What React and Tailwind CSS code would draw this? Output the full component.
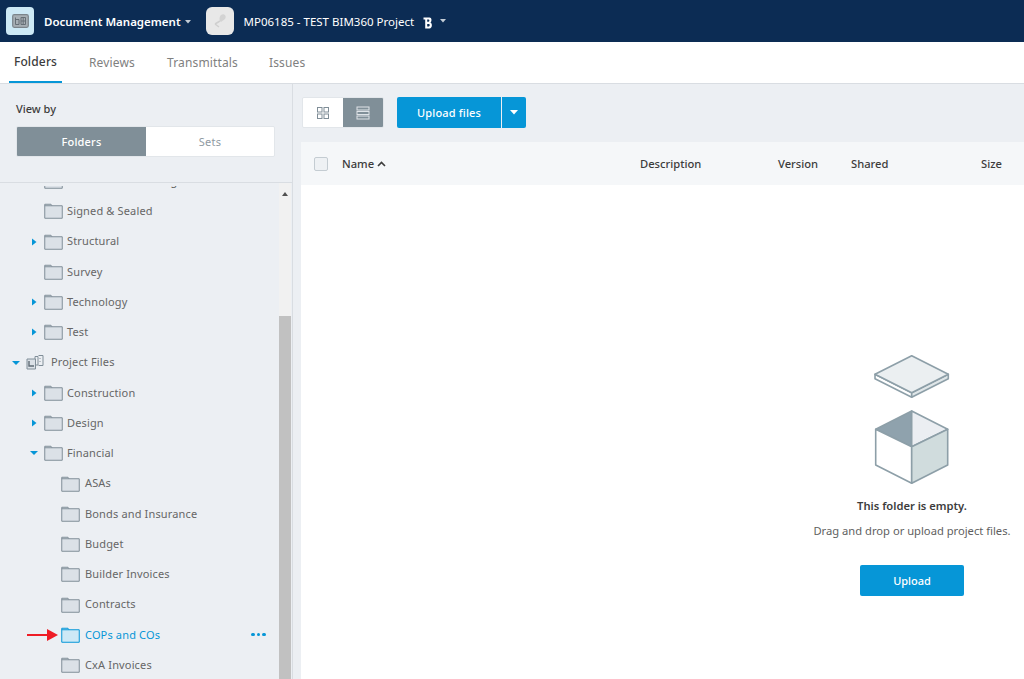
const font = { fontFamily: '"Noto Sans", "Open Sans", sans-serif' };

function Caret({ dir = "right", className = "" }) {
  return (
    <svg width="8" height="8" viewBox="0 0 8 8" className={className}>
      {dir === "right" ? <path d="M2 0.5 L6.5 4 L2 7.5 Z" fill="#0696d7" /> : <path d="M0 2 L8 2 L4 6 Z" fill="#0696d7" />}
    </svg>
  );
}

function Folder({ active }) {
  const stroke = active ? "#0696d7" : "#808e98";
  const fill = active ? "#cde9f6" : "#dbe1e7";
  return (
    <svg width="19" height="16" viewBox="0 0 19 16" className="shrink-0">
      <path d="M0.75 15.25 V1.25 H7 L8 2.75 H18.25 V15.25 Z" fill={fill} stroke={stroke} strokeWidth="1" />
      <path d="M0.75 2.75 H8" stroke={stroke} strokeWidth="1" fill="none" />
    </svg>
  );
}

function ProjectFilesIcon() {
  return (
    <svg width="18" height="15" viewBox="0 0 18 15" className="shrink-0">
      <path d="M9 1.5 H12 V10 H9 Z M12.5 0.5 H17 V10.5 H12.5" fill="#eceff3" stroke="#808e98" strokeWidth="1" />
      <path d="M1 4 H9.5 V14 H1 Z" fill="#dbe1e7" stroke="#808e98" strokeWidth="1" />
      <path d="M3 6 V11 H8" fill="none" stroke="#5f6b75" strokeWidth="1.4" />
      <path d="M14 3 V4 M14 6 V7" stroke="#808e98" strokeWidth="1" />
    </svg>
  );
}

function Row({ label, indent, caret, active, icon }) {
  const gap = icon === "project" ? "ml-[7px]" : indent === 47 ? "ml-[5px]" : "ml-[4px]";
  return (
    <div className="h-[30.25px] flex items-center relative">
      <div className="flex items-center" style={{ paddingLeft: indent }}>
        <span className="w-[14px] flex items-center shrink-0">{caret && <Caret dir={caret} />}</span>
        {icon === "project" ? <ProjectFilesIcon /> : <Folder active={active} />}
        <span className={`${gap} text-[11px] tracking-[0.15px] whitespace-nowrap ${active ? "text-[#0696d7]" : "text-[#666666]"}`}>{label}</span>
      </div>
      {active && (
        <span className="absolute left-[251px] top-[13px] flex gap-[2px]">
          <i className="block w-[3.5px] h-[3.5px] rounded-full bg-[#0696d7]" />
          <i className="block w-[3.5px] h-[3.5px] rounded-full bg-[#0696d7]" />
          <i className="block w-[3.5px] h-[3.5px] rounded-full bg-[#0696d7]" />
        </span>
      )}
    </div>
  );
}

const rows = [
  { label: "Site Observation Log", indent: 30 },
  { label: "Signed & Sealed", indent: 30 },
  { label: "Structural", indent: 30, caret: "right" },
  { label: "Survey", indent: 30 },
  { label: "Technology", indent: 30, caret: "right" },
  { label: "Test", indent: 30, caret: "right" },
  { label: "Project Files", indent: 12, caret: "down", icon: "project" },
  { label: "Construction", indent: 30, caret: "right" },
  { label: "Design", indent: 30, caret: "right" },
  { label: "Financial", indent: 30, caret: "down" },
  { label: "ASAs", indent: 47 },
  { label: "Bonds and Insurance", indent: 47 },
  { label: "Budget", indent: 47 },
  { label: "Builder Invoices", indent: 47 },
  { label: "Contracts", indent: 47 },
  { label: "COPs and COs", indent: 47, active: true },
  { label: "CxA Invoices", indent: 47 },
];

function Box() {
  return (
    <svg width="76" height="131" viewBox="874 354 76 131" className="block">
      <g stroke="#8d9fa8" strokeWidth="1.6" strokeLinejoin="round">
        <path d="M875 374.3 L911.7 392.7 V397.3 L875 378.8 Z" fill="#ffffff" />
        <path d="M948.3 374.3 L911.7 392.7 V397.3 L948.3 378.8 Z" fill="#dfe6e8" />
        <path d="M911.7 355.7 L948.3 374.3 L911.7 392.7 L875 374.3 Z" fill="#ebeff1" />
        <path d="M911.7 411 L875.7 429.3 L911.7 446.7 Z" fill="#8fa2ad" />
        <path d="M911.7 411 L947.7 429.3 L911.7 446.7 Z" fill="#ebeef2" />
        <path d="M875.7 429.3 L911.7 446.7 V483.3 L875.7 465 Z" fill="#ffffff" />
        <path d="M947.7 429.3 L911.7 446.7 V483.3 L947.7 465 Z" fill="#d0dcdd" />
      </g>
    </svg>
  );
}

export default function App() {
  return (
    <div style={font} className="w-[1024px] h-[679px] overflow-hidden flex flex-col bg-white relative">
      <header className="h-[42px] shrink-0 bg-[#0c2c54] flex items-center text-white">
        <div className="ml-[6px] w-[28px] h-[28px] rounded-[4px] bg-[#cde9f6] flex items-center justify-center">
          <svg width="17" height="14" viewBox="0 0 17 14">
            <rect x="0.7" y="0.7" width="15.6" height="12.6" rx="1.5" fill="#a7afb5" stroke="#7b848b" strokeWidth="1.2" />
            <path d="M3.5 3.5 V10.5 H7 V5.5 H3.5 M9 3.5 H13.5 V10.5 H9 Z M9 7 H13.5 M11.2 3.5 V10.5" fill="none" stroke="#666f76" strokeWidth="1" />
          </svg>
        </div>
        <span className="ml-[10px] mt-[2px] text-[11.5px] font-semibold whitespace-nowrap">Document Management</span>
        <svg width="6" height="4" viewBox="0 0 6 4" className="ml-[4px] mt-[2px]"><path d="M0 0 H6 L3 3.5 Z" fill="#c3ccd6" /></svg>
        <div className="ml-[15px] w-[28px] h-[28px] rounded-[6px] bg-[#e8e8e8] flex items-center justify-center">
          <svg width="16" height="18" viewBox="0 0 16 18">
            <path d="M9 3 C12 1 15 4 13 7 L9 10 C7 9 7 5 9 3 Z" fill="#d3d3d3" />
            <path d="M3 12 L8 9 M3 12 L7 15" stroke="#cfcfcf" strokeWidth="1.5" fill="none" />
          </svg>
        </div>
        <span className="ml-[10px] mt-[1px] text-[11.5px] whitespace-nowrap">MP06185 - TEST BIM360 Project</span>
        <svg width="10" height="12" viewBox="0 0 10 12" className="ml-[9px] mt-[3px]">
          <path fillRule="evenodd" d="M0.5 0.5 H6.5 C8.8 0.5 9.2 4.2 7.4 5.6 C9.6 6.6 9.4 11.5 6.5 11.5 H2.2 V2.6 H0.5 Z M4.2 2.6 V4.8 H5.6 C6.6 4.8 6.6 2.6 5.6 2.6 Z M4.2 7 V9.4 H5.9 C7 9.4 7 7 5.9 7 Z" fill="#ffffff" />
        </svg>
        <svg width="6" height="4" viewBox="0 0 6 4" className="ml-[7px]"><path d="M0 0 H6 L3 3.5 Z" fill="#c3ccd6" /></svg>
      </header>

      <nav className="h-[42px] shrink-0 bg-white border-b border-[#d9dde2] flex items-stretch text-[12px] tracking-[0.15px] text-[#808080]">
        <div className="ml-[9px] w-[53px] flex items-center justify-center border-b-2 border-[#0696d7] text-[#3c3c3c] font-medium h-[41px]">Folders</div>
        <div className="ml-[27px] flex items-center">Reviews</div>
        <div className="ml-[32px] flex items-center">Transmittals</div>
        <div className="ml-[31px] flex items-center">Issues</div>
      </nav>

      <div className="flex-1 flex min-h-0">
        <aside className="w-[293px] shrink-0 bg-[#eceff3] border-r border-[#d9dde2] flex flex-col">
          <div className="h-[99px] shrink-0 border-b border-[#d9dde2] pl-[16px] pt-[17px]">
            <div className="text-[11px] font-medium text-[#3c3c3c] leading-[16px]">View by</div>
            <div className="mt-[9px] w-[259px] h-[31px] rounded-[2px] flex text-[11px] tracking-[0.2px] overflow-hidden border border-[#e2e6ea]">
              <div className="w-[129px] pt-[1px] bg-[#808f98] text-white flex items-center justify-center font-medium">Folders</div>
              <div className="flex-1 pt-[1px] bg-white text-[#8f9aa2] flex items-center justify-center">Sets</div>
            </div>
          </div>
          <div className="flex-1 flex min-h-0">
            <div className="flex-1 overflow-hidden relative mt-[3px]">
              <div className="-mt-[20px]">
                {rows.map((r) => <Row key={r.label} {...r} />)}
              </div>
              <svg width="32" height="12" viewBox="0 0 32 12" className="absolute left-[27px] top-[443px]">
                <path d="M0 6 H20" stroke="#ee1c25" strokeWidth="2" />
                <path d="M20 0 L31 6 L20 12 Z" fill="#ee1c25" />
              </svg>
            </div>
            <div className="w-[12px] mr-[1px] shrink-0 bg-[#f1f1f1] flex flex-col">
              <div className="h-[133px] pt-[9px] flex justify-center">
                <svg width="6" height="4" viewBox="0 0 6 4"><path d="M0 4 H6 L3 0 Z" fill="#505050" /></svg>
              </div>
              <div className="flex-1 bg-[#c1c1c1]" />
            </div>
          </div>
        </aside>

        <main className="flex-1 min-w-0 bg-[#eceff3] flex flex-col pl-[8px]">
          <div className="h-[58px] shrink-0 flex items-start pt-[13px]">
            <div className="ml-[1px] w-[82px] h-[31px] rounded-[2px] flex overflow-hidden border border-[#e2e6ea]">
              <div className="w-[40px] bg-white flex items-center justify-center">
                <svg width="14" height="14" viewBox="0 0 14 14" fill="none" stroke="#808e98" strokeWidth="1"><rect x="1.5" y="1.5" width="4.5" height="4.5" /><rect x="8" y="1.5" width="4.5" height="4.5" /><rect x="1.5" y="8" width="4.5" height="4.5" /><rect x="8" y="8" width="4.5" height="4.5" /></svg>
              </div>
              <div className="flex-1 bg-[#808f98] flex items-center justify-center">
                <svg width="14" height="14" viewBox="0 0 14 14" fill="none" stroke="#dfe4e8" strokeWidth="1"><rect x="1" y="1" width="12" height="3" /><rect x="1" y="5.5" width="12" height="3" /><rect x="1" y="10" width="12" height="3" /></svg>
              </div>
            </div>
            <div className="ml-[13px] h-[31px] flex text-white text-[11px] tracking-[0.15px]">
              <div className="w-[104px] pt-[1px] bg-[#0696d7] rounded-l-[2px] flex items-center justify-center font-medium">Upload files</div>
              <div className="ml-[1px] w-[24px] bg-[#0696d7] rounded-r-[2px] flex items-center justify-center">
                <svg width="8" height="5" viewBox="0 0 8 5"><path d="M0 0 H8 L4 4.5 Z" fill="#ffffff" /></svg>
              </div>
            </div>
          </div>

          <div className="flex-1 w-[1222px] bg-white flex flex-col min-h-0">
            <div className="h-[43px] shrink-0 pt-[1px] bg-[#f5f7f9] flex items-center text-[11.2px] font-medium text-[#3c3c3c]">
              <span className="ml-[13px] w-[14px] h-[14px] rounded-[2px] border border-[#c4ccd2] bg-[#eef1f4]" />
              <span className="ml-[14px] flex items-center w-[298px]">Name
                <svg width="9" height="6" viewBox="0 0 9 6" className="ml-[3px]"><path d="M1 5 L4.5 1.5 L8 5" fill="none" stroke="#3c3c3c" strokeWidth="1.6" /></svg>
              </span>
              <span className="w-[138px]">Description</span>
              <span className="w-[73px]">Version</span>
              <span className="w-[130px]">Shared</span>
              <span>Size</span>
            </div>
            <div className="flex flex-col items-center pt-[169px]">
              <Box />
              <div className="mt-[13px] text-[11.2px] font-semibold text-[#3c3c3c] leading-[16px]">This folder is empty.</div>
              <div className="mt-[9px] text-[11.2px] text-[#5f5f5f] leading-[16px]">Drag and drop or upload project files.</div>
              <div className="mt-[26px] w-[104px] h-[31px] pt-[1px] rounded-[2px] bg-[#0696d7] text-white text-[11px] font-medium flex items-center justify-center">Upload</div>
            </div>
          </div>
        </main>
      </div>
    </div>
  );
}
